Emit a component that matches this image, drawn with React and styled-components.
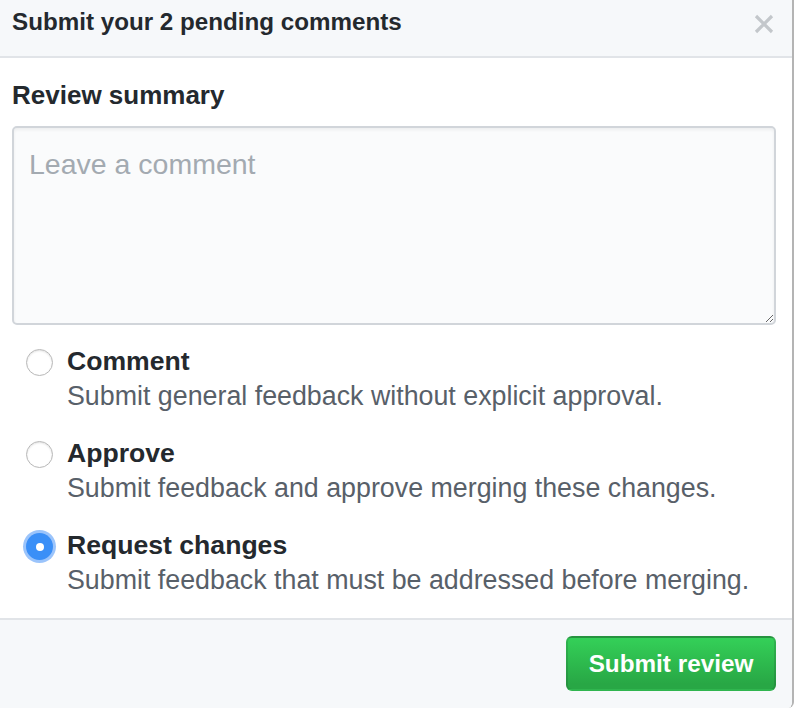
import React, { useState } from "react";
import styled, { createGlobalStyle } from "styled-components";

const GlobalStyle = createGlobalStyle`
  body {
    margin: 0;
    background: #ffffff;
    font-family: "Liberation Sans", Arial, sans-serif;
    color: #24292e;
  }
`;

const Panel = styled.div`
  width: 794px;
  height: 708px;
  box-sizing: border-box;
  border-right: 2px solid #b4b4b4;
  border-bottom-right-radius: 6px;
  display: flex;
  flex-direction: column;
  overflow: hidden;
`;

const Header = styled.div`
  height: 58px;
  box-sizing: border-box;
  flex-shrink: 0;
  display: flex;
  align-items: flex-start;
  justify-content: space-between;
  padding: 8px 18px 0 12px;
  background: #f6f8fa;
  border-bottom: 2px solid #e1e4e8;
`;

const Title = styled.h1`
  margin: 0;
  font-size: 24.2px;
  line-height: 28px;
  font-weight: 700;
  color: #24292e;
`;

const CloseButton = styled.button`
  border: 0;
  background: none;
  padding: 0;
  margin-top: 6px;
  display: flex;
  color: #c3c7cb;
  cursor: pointer;
`;

const Body = styled.div`
  flex: 1;
  padding: 22px 16px 0 12px;
`;

const SectionTitle = styled.h2`
  margin: 0 0 16px;
  font-size: 26px;
  font-weight: 700;
  line-height: 30px;
`;

const CommentBox = styled.textarea`
  display: block;
  box-sizing: border-box;
  width: 764px;
  height: 199px;
  padding: 20px 15px;
  border: 2px solid #d1d5da;
  border-radius: 5px;
  background: #fafbfc;
  box-shadow: inset 0 2px 3px rgba(27, 31, 35, 0.06);
  font-family: "Liberation Sans", Arial, sans-serif;
  font-size: 28.5px;
  color: #24292e;
  resize: vertical;
  outline: none;

  &::placeholder {
    color: #a3aab1;
  }
`;

const Options = styled.div`
  display: flex;
  flex-direction: column;
  gap: 22px;
  padding: 19px 0 0 14px;
`;

const Option = styled.label`
  display: grid;
  grid-template-columns: 27px 1fr;
  column-gap: 14px;
  cursor: pointer;
`;

const Radio = styled.span`
  width: 27px;
  height: 27px;
  margin-top: 5px;
  box-sizing: border-box;
  border-radius: 50%;
  display: flex;
  align-items: center;
  justify-content: center;
  background: ${(p) => (p.checked ? "#3a8ff7" : "#fff")};
  border: ${(p) => (p.checked ? "none" : "1.5px solid #b8b8b8")};
  box-shadow: ${(p) =>
    p.checked
      ? "0 0 0 3px rgba(101, 164, 249, 0.65)"
      : "inset 0 1px 2px rgba(0,0,0,0.12)"};

  &::after {
    content: "";
    display: ${(p) => (p.checked ? "block" : "none")};
    width: 8px;
    height: 8px;
    border-radius: 50%;
    background: #fff;
  }
`;

const OptionText = styled.div`
  display: flex;
  flex-direction: column;
`;

const OptionLabel = styled.span`
  font-size: 26.6px;
  font-weight: 700;
  line-height: 35px;
  color: #24292e;
`;

const OptionNote = styled.span`
  font-size: 26.8px;
  line-height: 35px;
  color: #586069;
`;

const Footer = styled.div`
  height: 90px;
  flex-shrink: 0;
  box-sizing: border-box;
  display: flex;
  justify-content: flex-end;
  align-items: flex-start;
  padding: 16px 16px 0;
  background: #f6f8fa;
  border-top: 2px solid #e1e4e8;
`;

const SubmitButton = styled.button`
  width: 210px;
  height: 55px;
  border: 2px solid rgba(27, 31, 35, 0.15);
  border-radius: 6px;
  background: linear-gradient(#34d058, #28a745 90%);
  color: #fff;
  font-family: "Liberation Sans", Arial, sans-serif;
  font-size: 24.3px;
  font-weight: 700;
  cursor: pointer;
`;

const choices = [
  {
    id: "comment",
    label: "Comment",
    note: "Submit general feedback without explicit approval.",
  },
  {
    id: "approve",
    label: "Approve",
    note: "Submit feedback and approve merging these changes.",
  },
  {
    id: "reject",
    label: "Request changes",
    note: "Submit feedback that must be addressed before merging.",
  },
];

export default function App() {
  const [selected, setSelected] = useState("reject");

  return (
    <>
      <GlobalStyle />
      <Panel>
        <Header>
          <Title>Submit your 2 pending comments</Title>
          <CloseButton aria-label="Close">
            <svg width="20" height="20" viewBox="0 0 20 20">
              <path
                d="M2 2 L18 18 M18 2 L2 18"
                stroke="currentColor"
                strokeWidth="3.2"
              />
            </svg>
          </CloseButton>
        </Header>
        <Body>
          <SectionTitle>Review summary</SectionTitle>
          <CommentBox placeholder="Leave a comment" />
          <Options>
            {choices.map((c) => (
              <Option key={c.id} onClick={() => setSelected(c.id)}>
                <Radio checked={selected === c.id} />
                <OptionText>
                  <OptionLabel>{c.label}</OptionLabel>
                  <OptionNote>{c.note}</OptionNote>
                </OptionText>
              </Option>
            ))}
          </Options>
        </Body>
        <Footer>
          <SubmitButton>Submit review</SubmitButton>
        </Footer>
      </Panel>
    </>
  );
}
